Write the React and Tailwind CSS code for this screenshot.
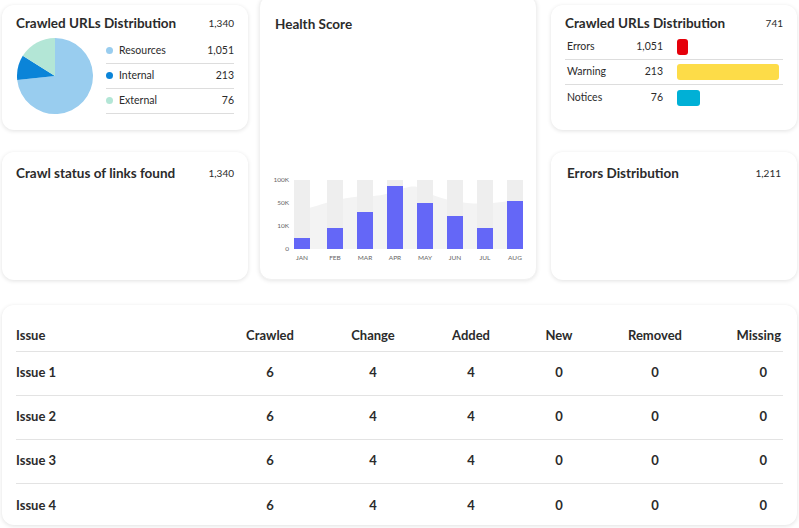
import React from "react";

const font = { fontFamily: "Lato, 'Open Sans', sans-serif" };

function pt(cx, cy, r, deg) {
  const a = ((deg - 90) * Math.PI) / 180;
  return [cx + r * Math.cos(a), cy + r * Math.sin(a)];
}
function slice(cx, cy, r, a0, a1) {
  const [x0, y0] = pt(cx, cy, r, a0);
  const [x1, y1] = pt(cx, cy, r, a1);
  const large = a1 - a0 > 180 ? 1 : 0;
  return `M${cx},${cy} L${x0},${y0} A${r},${r} 0 ${large} 1 ${x1},${y1} Z`;
}

function Pie() {
  return (
    <svg width="78" height="78" viewBox="0 0 78 78">
      <path d={slice(39, 39, 38, 0, 264)} fill="#99cdef" />
      <path d={slice(39, 39, 38, 264, 302)} fill="#0b84d8" />
      <path d={slice(39, 39, 38, 302, 360)} fill="#b3e6d6" />
    </svg>
  );
}

const Card = ({ className = "", children }) => (
  <div className={"bg-white rounded-xl shadow-[0_1px_4px_rgba(0,0,0,0.12)] " + className}>{children}</div>
);

function Chart() {
  const xs = [34, 67, 97, 127, 157, 187, 217, 247];
  const tops = [238, 228, 212, 186, 203, 216, 228, 201];
  const months = ["JAN", "FEB", "MAR", "APR", "MAY", "JUN", "JUL", "AUG"];
  const base = 249 - 180 + 4;
  return (
    <svg width="278" height="100" viewBox="0 0 278 100" style={font}>
      <path d="M34,73 L34,36 C60,30 80,20 110,20 C140,20 150,0 170,18 C200,30 230,30 263,22 L263,73 Z" fill="#f3f3f3" />
      {xs.map((x, i) => (
        <g key={i}>
          <rect x={x} y={4} width={16} height={base - 4} fill="#eeeeee" />
          <rect x={x} y={tops[i] - 176} width={16} height={249 - tops[i]} fill="#6467f7" />
          <text x={x + 8} y={base + 11} fontSize="6.5" fill="#666" textAnchor="middle">{months[i]}</text>
        </g>
      ))}
      {[["100K", 6], ["50K", 29], ["10K", 52], ["0", 75]].map(([t, y]) => (
        <text key={t} x={29} y={y} fontSize="6.5" fill="#666" textAnchor="end">{t}</text>
      ))}
    </svg>
  );
}

const rows = ["Issue 1", "Issue 2", "Issue 3", "Issue 4"];

export default function App() {
  return (
    <div className="w-[799px] h-[528px] bg-white relative overflow-hidden text-[#2b2b2b]" style={font}>
      <div className="flex gap-[11px] pl-[2px] pt-[5px] h-[280px]">
        <div className="flex flex-col gap-[22px] w-[246px]">
          <Card className="h-[125px] px-[14px] pt-[8px]">
            <div className="flex justify-between items-center">
              <span className="text-[13.5px] font-bold">Crawled URLs Distribution</span>
              <span className="text-[10px]">1,340</span>
            </div>
            <div className="flex items-center mt-[4px] gap-[12px]">
              <Pie />
              <div className="flex-1 text-[10.5px]">
                {[["Resources", "1,051", "#99cdef"], ["Internal", "213", "#0b84d8"], ["External", "76", "#b3e6d6"]].map(([n, v, c]) => (
                  <div key={n} className="flex items-center justify-between h-[25px] border-b border-[#dddddd]">
                    <span className="flex items-center gap-[6px]"><span className="w-[7px] h-[7px] rounded-full" style={{ background: c }} />{n}</span>
                    <span>{v}</span>
                  </div>
                ))}
              </div>
            </div>
          </Card>
          <Card className="h-[128px] px-[14px] pt-[11px]">
            <div className="flex justify-between items-center">
              <span className="text-[13.5px] font-bold">Crawl status of links found</span>
              <span className="text-[10px]">1,340</span>
            </div>
          </Card>
        </div>
        <div className="w-[278px] -mt-[10px] h-[285px] bg-white rounded-xl border border-[#f1f1f1] shadow-[0_1px_4px_rgba(0,0,0,0.10)] px-[15px] pt-[18px] flex flex-col">
          <span className="text-[13.5px] font-bold">Health Score</span>
          <div className="mt-auto mb-[3px] -mx-[15px]"><Chart /></div>
        </div>
        <div className="flex flex-col gap-[22px] w-[246px] ml-[3px]">
          <Card className="h-[125px] px-[14px] pt-[8px]">
            <div className="flex justify-between items-center">
              <span className="text-[13.5px] font-bold">Crawled URLs Distribution</span>
              <span className="text-[10px]">741</span>
            </div>
            <div className="mt-[2px] text-[10.5px]">
              {[["Errors", "1,051", "#e5000a", 11], ["Warning", "213", "#fddc48", 102], ["Notices", "76", "#00b0d6", 23]].map(([n, v, c, w], i) => (
                <div key={n} className={"flex items-center h-[25px] " + (i < 2 ? "border-b border-[#dddddd]" : "")}>
                  <span className="w-[64px] pl-[2px]">{n}</span>
                  <span className="w-[34px] text-right">{v}</span>
                  <span className="ml-[14px] h-[16px] rounded-[3px]" style={{ background: c, width: w }} />
                </div>
              ))}
            </div>
          </Card>
          <Card className="h-[128px] px-[16px] pt-[11px]">
            <div className="flex justify-between items-center">
              <span className="text-[13.5px] font-bold">Errors Distribution</span>
              <span className="text-[10px]">1,211</span>
            </div>
          </Card>
        </div>
      </div>
      <Card className="absolute left-[2px] top-[305px] w-[795px] h-[220px] px-[14px] pt-[16px]">
        <table className="w-full text-[13px] font-bold">
          <thead>
            <tr className="h-[30px] border-b border-[#e3e3e3]">
              <th className="text-left font-bold w-[200px]">Issue</th>
              <th className="font-bold w-[108px]">Crawled</th>
              <th className="font-bold w-[98px]">Change</th>
              <th className="font-bold w-[98px]">Added</th>
              <th className="font-bold w-[78px]">New</th>
              <th className="font-bold w-[114px]">Removed</th>
              <th className="font-bold text-right pr-[2px]">Missing</th>
            </tr>
          </thead>
          <tbody>
            {rows.map((r, i) => (
              <tr key={r} className={"h-[44px] " + (i < 3 ? "border-b border-[#e3e3e3]" : "")}>
                <td>{r}</td>
                <td className="text-center">6</td>
                <td className="text-center">4</td>
                <td className="text-center">4</td>
                <td className="text-center">0</td>
                <td className="text-center">0</td>
                <td className="text-right pr-[16px]">0</td>
              </tr>
            ))}
          </tbody>
        </table>
      </Card>
    </div>
  );
}
